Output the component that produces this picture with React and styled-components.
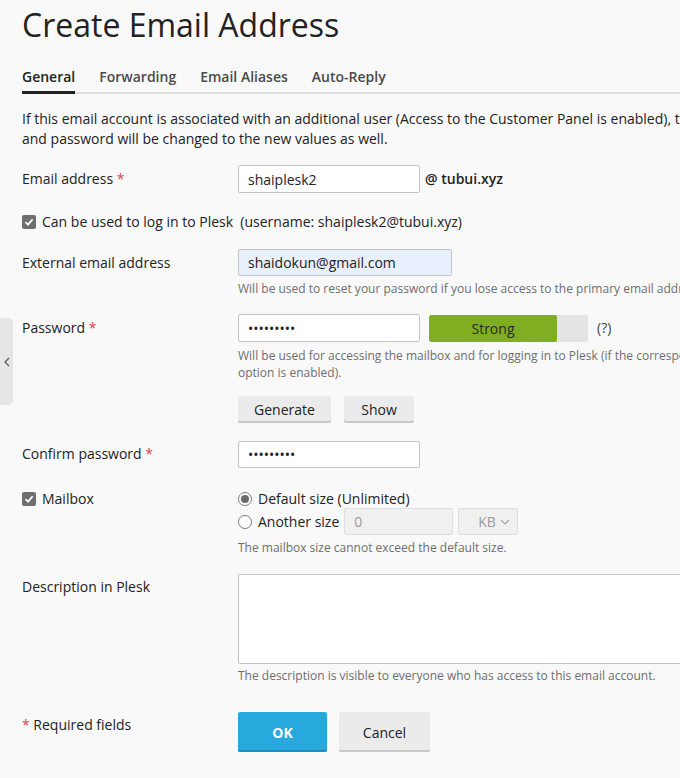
import React from "react";
import styled, { createGlobalStyle } from "styled-components";

const GlobalStyle = createGlobalStyle`
  html, body {
    margin: 0;
    padding: 0;
    background: #f9f9f9;
    overflow: hidden;
  }
  body {
    font-family: "Open Sans", "DejaVu Sans", sans-serif;
    font-size: 14px;
    line-height: 20px;
    color: #222;
  }
`;

export default function App() {
  return (
    <>
      <GlobalStyle />
      <SideHandle>
        <svg width="6" height="10" viewBox="0 0 6 10">
          <path d="M5 1 L1 5 L5 9" fill="none" stroke="#555" strokeWidth="1.2" />
        </svg>
      </SideHandle>
      <Page>
        <Title>Create Email Address</Title>
        <Tabs>
          <Tab $active>General</Tab>
          <Tab>Forwarding</Tab>
          <Tab>Email Aliases</Tab>
          <Tab>Auto-Reply</Tab>
        </Tabs>

        <Intro>
          <span>
            If this email account is associated with an additional user (Access to the Customer Panel is enabled), the username
          </span>
          <br />
          <span>and password will be changed to the new values as well.</span>
        </Intro>

        <Row $top={16}>
          <Label $pad={4}>
            Email address <Req>*</Req>
          </Label>
          <Inline>
            <TextInput $w={182} defaultValue="shaiplesk2" />
            <Domain>@ tubui.xyz</Domain>
          </Inline>
        </Row>

        <CheckLine $top={19}>
          <CheckBox />
          <span>Can be used to log in to Plesk&nbsp; (username: shaiplesk2@tubui.xyz)</span>
        </CheckLine>

        <Row $top={17}>
          <Label $pad={4}>External email address</Label>
          <div>
            <TextInput $w={214} $h={27} $bg="#e8f0fe" defaultValue="shaidokun@gmail.com" />
            <Hint $top={4}>
              Will be used to reset your password if you lose access to the primary email address.
            </Hint>
          </div>
        </Row>

        <Row $top={17}>
          <Label $pad={4}>
            Password <Req>*</Req>
          </Label>
          <div>
            <Inline>
              <TextInput $w={182} type="password" defaultValue="qwertyuio" />
              <Meter>
                <MeterFill style={{ width: "80.5%" }}>Strong</MeterFill>
              </Meter>
              <HelpMark>(?)</HelpMark>
            </Inline>
            <Hint $top={5}>
              Will be used for accessing the mailbox and for logging in to Plesk (if the corresponding
              <br />
              option is enabled).
            </Hint>
            <ButtonBar $top={15} $gap={13}>
              <Button $w={93}>Generate</Button>
              <Button $w={70}>Show</Button>
            </ButtonBar>
          </div>
        </Row>

        <Row $top={18}>
          <Label $pad={3}>
            Confirm password <Req>*</Req>
          </Label>
          <div>
            <TextInput $w={182} $h={27} type="password" defaultValue="qwertyuio" />
          </div>
        </Row>

        <Row $top={21}>
          <CheckLabel>
            <CheckBox />
            <span>Mailbox</span>
          </CheckLabel>
          <div>
            <RadioLine>
              <Radio $on />
              <span>Default size (Unlimited)</span>
            </RadioLine>
            <RadioLine $top={-1}>
              <Radio />
              <span>Another size</span>
              <TextInput $w={109} $h={27} $bg="#f0f0f0" $muted disabled defaultValue="0" />
              <FakeSelect>
                <span>KB</span>
                <svg width="10" height="6" viewBox="0 0 10 6">
                  <path d="M1 1 L5 5 L9 1" fill="none" stroke="#a5a5a5" strokeWidth="1.2" />
                </svg>
              </FakeSelect>
            </RadioLine>
            <Hint $top={4}>The mailbox size cannot exceed the default size.</Hint>
          </div>
        </Row>

        <Row $top={18}>
          <Label $pad={3}>Description in Plesk</Label>
          <div>
            <TextArea />
            <Hint $top={3}>The description is visible to everyone who has access to this email account.</Hint>
          </div>
        </Row>

        <Row $top={28}>
          <Label $pad={3}>
            <Req>*</Req> Required fields
          </Label>
          <ButtonBar $gap={12}>
            <Button $w={89} $h={40} $primary>OK</Button>
            <Button $w={91} $h={40}>Cancel</Button>
          </ButtonBar>
        </Row>
      </Page>
    </>
  );
}

function CheckBox() {
  return (
    <CheckSquare>
      <svg width="10" height="10" viewBox="0 0 10 10">
        <path d="M1.5 5.2 L4 7.6 L8.6 2.4" fill="none" stroke="#fff" strokeWidth="1.8" />
      </svg>
    </CheckSquare>
  );
}

const Page = styled.div`
  width: 900px;
  padding-left: 22px;
`;

const SideHandle = styled.div`
  position: absolute;
  left: 0;
  top: 318px;
  width: 13px;
  height: 87px;
  background: #e6e6e6;
  border-radius: 0 5px 5px 0;
  display: flex;
  align-items: center;
  justify-content: center;
`;

const Title = styled.h1`
  margin: 3px 0 0;
  font-size: 32px;
  line-height: 44px;
  font-weight: 400;
  color: #222;
`;

const Tabs = styled.div`
  margin-top: 20px;
  display: flex;
  gap: 24px;
  border-bottom: 2px solid #dedede;
`;

const Tab = styled.div`
  font-weight: 600;
  color: ${(p) => (p.$active ? "#222" : "#4a4a4a")};
  padding-bottom: 4px;
  margin-bottom: -2px;
  border-bottom: 3px solid ${(p) => (p.$active ? "#222" : "transparent")};
`;

const Intro = styled.p`
  margin: 15px 0 0;
  white-space: nowrap;
  color: #222;
`;

const Row = styled.div`
  display: grid;
  grid-template-columns: 216px 1fr;
  margin-top: ${(p) => p.$top || 0}px;
`;

const Label = styled.div`
  padding-top: ${(p) => p.$pad || 0}px;
  color: #222;
`;

const Req = styled.span`
  color: #d9454f;
`;

const Inline = styled.div`
  display: flex;
  align-items: center;
`;

const TextInput = styled.input`
  box-sizing: border-box;
  width: ${(p) => p.$w}px;
  height: ${(p) => p.$h || 28}px;
  padding: 0 9px;
  border: 1px solid ${(p) => (p.$muted ? "#dedede" : "#c3c3c3")};
  border-radius: 2px;
  background: ${(p) => p.$bg || "#fff"};
  font-family: "Open Sans", sans-serif;
  font-size: 14px;
  color: ${(p) => (p.$muted ? "#9a9a9a" : "#222")};
  outline: none;
  &:disabled {
    color: #9a9a9a;
  }
`;

const Domain = styled.span`
  margin-left: 5px;
  font-weight: 600;
  color: #222;
`;

const CheckLine = styled.div`
  display: flex;
  align-items: center;
  gap: 6px;
  margin-top: ${(p) => p.$top || 0}px;
`;

const CheckLabel = styled.div`
  display: flex;
  align-items: center;
  gap: 6px;
  height: 20px;
`;

const CheckSquare = styled.span`
  width: 14px;
  height: 14px;
  border-radius: 2px;
  background: #6f6f6f;
  display: inline-flex;
  align-items: center;
  justify-content: center;
  flex-shrink: 0;
`;

const Hint = styled.div`
  margin-top: ${(p) => p.$top || 0}px;
  font-size: 12px;
  line-height: 17px;
  color: #6e6e6e;
  white-space: nowrap;
`;

const Meter = styled.div`
  margin-left: 9px;
  width: 159px;
  height: 27px;
  border-radius: 2px;
  background: #e4e4e4;
  overflow: hidden;
`;

const MeterFill = styled.div`
  height: 100%;
  background: #7fae22;
  border-radius: 2px;
  text-align: center;
  line-height: 27px;
  color: #2b2b2b;
`;

const HelpMark = styled.span`
  margin-left: 9px;
  color: #444;
`;

const ButtonBar = styled.div`
  display: flex;
  gap: ${(p) => p.$gap || 12}px;
  margin-top: ${(p) => p.$top || 0}px;
`;

const Button = styled.button`
  box-sizing: border-box;
  width: ${(p) => p.$w}px;
  height: ${(p) => p.$h || 27}px;
  border: none;
  border-radius: 2px;
  font-family: "Open Sans", sans-serif;
  font-size: 14px;
  font-weight: ${(p) => (p.$primary ? 700 : 400)};
  color: ${(p) => (p.$primary ? "#fff" : "#222")};
  background: ${(p) => (p.$primary ? "#28a9de" : "#ebebeb")};
  box-shadow: inset 0 -2px 0 ${(p) => (p.$primary ? "#1f8ec0" : "#c9c9c9")};
  padding: 0;
`;

const RadioLine = styled.div`
  display: flex;
  align-items: center;
  gap: 5px;
  min-height: 20px;
  margin-top: ${(p) => p.$top || 0}px;
`;

const Radio = styled.span`
  box-sizing: border-box;
  width: 14px;
  height: 14px;
  border-radius: 50%;
  border: 1px solid #7a7a7a;
  background: #fff;
  display: inline-flex;
  align-items: center;
  justify-content: center;
  margin-right: 1px;
  &::after {
    content: "";
    width: 8px;
    height: 8px;
    border-radius: 50%;
    background: ${(p) => (p.$on ? "#6a6a6a" : "transparent")};
  }
`;

const FakeSelect = styled.div`
  box-sizing: border-box;
  width: 60px;
  height: 27px;
  border: 1px solid #dedede;
  border-radius: 2px;
  background: #f0f0f0;
  color: #9a9a9a;
  display: flex;
  align-items: center;
  justify-content: space-between;
  padding: 0 7px 0 19px;
`;

const TextArea = styled.textarea`
  display: block;
  box-sizing: border-box;
  width: 480px;
  height: 90px;
  border: 1px solid #c3c3c3;
  border-radius: 2px;
  background: #fff;
  resize: none;
  outline: none;
`;
